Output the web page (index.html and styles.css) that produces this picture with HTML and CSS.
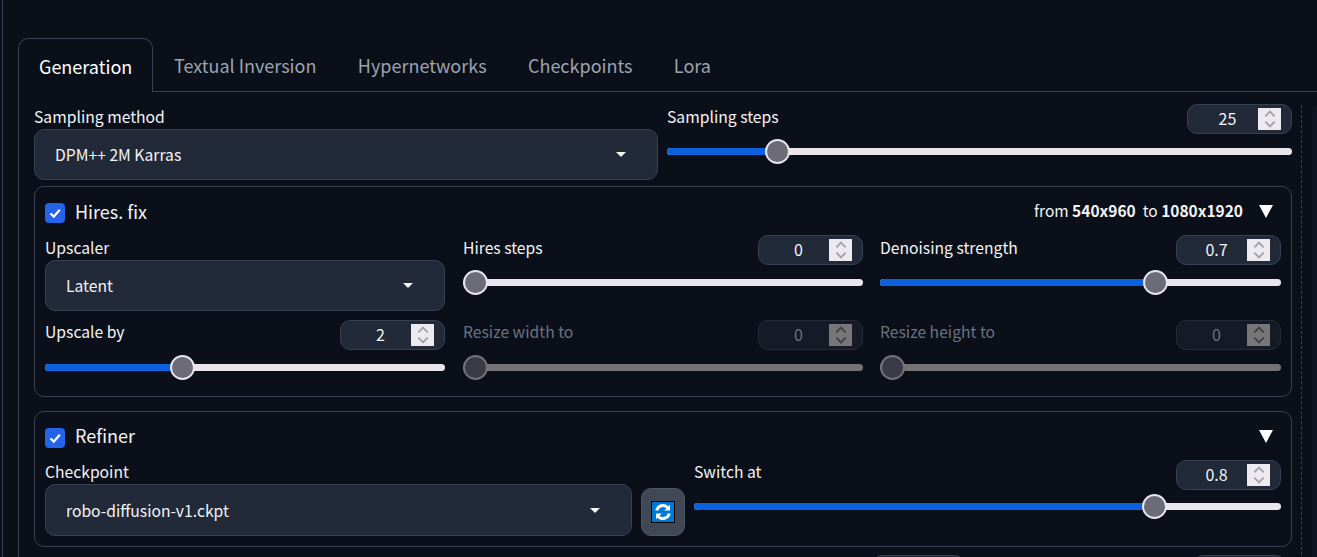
FILE: index.html
```html
<!DOCTYPE html>
<html>
<head>
    <title>Generation</title>
    <link rel="stylesheet" href="styles.css">
</head>
<body>
    <div id="page">
        <div id="tabs">
            <div class="tabNav">
                <div class="tabBtn active">Generation</div>
                <div class="tabBtn">Textual Inversion</div>
                <div class="tabBtn">Hypernetworks</div>
                <div class="tabBtn">Checkpoints</div>
                <div class="tabBtn">Lora</div>
                <div class="tabRest"></div>
            </div>
            <div class="tabBody">
                <div class="mainCol">
                    <div class="topRow">
                        <div class="dropField firstRow">
                            <div class="label">Sampling method</div>
                            <div class="select"><span>DPM++ 2M Karras</span><i class="caret"></i></div>
                        </div>
                        <div class="slider firstRow">
                            <div class="sliderHead">
                                <span class="label">Sampling steps</span>
                                <div class="num"><span>25</span><b class="spin"><svg viewBox="0 0 12 16"><path d="M2.5 6 6 2.5 9.5 6M2.5 10 6 13.5 9.5 10"/></svg></b></div>
                            </div>
                            <div class="track"><div class="fill" style="width: 17.6%"></div><div class="thumb" style="left: 17.6%"></div></div>
                        </div>
                    </div>

                    <div class="group hires">
                        <div class="groupHead">
                            <span class="check"><svg viewBox="0 0 20 20"><path d="M5.5 10.5 8.8 13.6 14.8 6.8"/></svg></span>
                            <span class="groupTitle">Hires. fix</span>
                            <span class="info">from <b>540x960</b>&nbsp; to <b>1080x1920</b></span>
                            <span class="arrow"></span>
                        </div>
                        <div class="grid3">
                            <div class="dropField firstRow">
                                <div class="label">Upscaler</div>
                                <div class="select"><span>Latent</span><i class="caret"></i></div>
                            </div>
                            <div class="slider firstRow">
                                <div class="sliderHead">
                                    <span class="label">Hires steps</span>
                                    <div class="num"><span>0</span><b class="spin"><svg viewBox="0 0 12 16"><path d="M2.5 6 6 2.5 9.5 6M2.5 10 6 13.5 9.5 10"/></svg></b></div>
                                </div>
                                <div class="track"><div class="fill" style="width: 3%"></div><div class="thumb" style="left: 3%"></div></div>
                            </div>
                            <div class="slider firstRow lastCol">
                                <div class="sliderHead">
                                    <span class="label">Denoising strength</span>
                                    <div class="num"><span>0.7</span><b class="spin"><svg viewBox="0 0 12 16"><path d="M2.5 6 6 2.5 9.5 6M2.5 10 6 13.5 9.5 10"/></svg></b></div>
                                </div>
                                <div class="track"><div class="fill" style="width: 68.7%"></div><div class="thumb" style="left: 68.7%"></div></div>
                            </div>
                            <div class="slider">
                                <div class="sliderHead">
                                    <span class="label">Upscale by</span>
                                    <div class="num"><span>2</span><b class="spin"><svg viewBox="0 0 12 16"><path d="M2.5 6 6 2.5 9.5 6M2.5 10 6 13.5 9.5 10"/></svg></b></div>
                                </div>
                                <div class="track"><div class="fill" style="width: 34.4%"></div><div class="thumb" style="left: 34.4%"></div></div>
                            </div>
                            <div class="slider off">
                                <div class="sliderHead">
                                    <span class="label">Resize width to</span>
                                    <div class="num"><span>0</span><b class="spin"><svg viewBox="0 0 12 16"><path d="M2.5 6 6 2.5 9.5 6M2.5 10 6 13.5 9.5 10"/></svg></b></div>
                                </div>
                                <div class="track"><div class="thumb" style="left: 3%"></div></div>
                            </div>
                            <div class="slider off lastCol">
                                <div class="sliderHead">
                                    <span class="label">Resize height to</span>
                                    <div class="num"><span>0</span><b class="spin"><svg viewBox="0 0 12 16"><path d="M2.5 6 6 2.5 9.5 6M2.5 10 6 13.5 9.5 10"/></svg></b></div>
                                </div>
                                <div class="track"><div class="thumb" style="left: 3%"></div></div>
                            </div>
                        </div>
                    </div>

                    <div class="group refiner">
                        <div class="groupHead">
                            <span class="check"><svg viewBox="0 0 20 20"><path d="M5.5 10.5 8.8 13.6 14.8 6.8"/></svg></span>
                            <span class="groupTitle">Refiner</span>
                            <span class="arrow"></span>
                        </div>
                        <div class="refinerRow">
                            <div class="dropField">
                                <div class="label">Checkpoint</div>
                                <div class="select"><span>robo-diffusion-v1.ckpt</span><i class="caret"></i></div>
                            </div>
                            <div class="refresh">
                                <span class="refreshIcon"><svg viewBox="0 0 16 16"><path d="M3 6.8A5.2 5.2 0 0 1 11.8 4.4M13 9.2A5.2 5.2 0 0 1 4.2 11.6"/><path class="solid" d="M13.6 2.2v4.6H9zM2.4 13.8V9.2H7z"/></svg></span>
                            </div>
                            <div class="slider">
                                <div class="sliderHead">
                                    <span class="label">Switch at</span>
                                    <div class="num"><span>0.8</span><b class="spin"><svg viewBox="0 0 12 16"><path d="M2.5 6 6 2.5 9.5 6M2.5 10 6 13.5 9.5 10"/></svg></b></div>
                                </div>
                                <div class="track"><div class="fill" style="width: 78.4%"></div><div class="thumb" style="left: 78.4%"></div></div>
                            </div>
                        </div>
                    </div>

                    <div class="nextRow">
                        <div class="stub"></div>
                        <div class="stub"></div>
                    </div>
                </div>
                <div class="sideCol"></div>
                <div class="sidePanel"></div>
            </div>
        </div>
    </div>
</body>
</html>
```

FILE: styles.css
```css
html, body {
    padding: 0;
    margin: 0;
    height: 100%;
    overflow: hidden;
    background: #0b0f19;
    color: #f3f4f6;
    font-family: "Noto Sans CJK SC", "Noto Sans", sans-serif;
    font-size: 16px;
}
#page {
    height: 557px;
    margin-left: 2px;
    padding: 38px 0 0 15px;
    border-left: 1px solid #374151;
    box-sizing: border-box;
    overflow: hidden;
}
#tabs {
    display: flex;
    flex-direction: column;
}
.tabNav {
    display: flex;
    height: 54px;
}
.tabBtn {
    padding: 0 20.7px;
    line-height: 54px;
    font-size: 18px;
    color: #9ca3af;
    border-bottom: 1px solid #374151;
}
.tabBtn.active {
    color: #fff;
    border: 1px solid #374151;
    border-bottom: 0;
    border-radius: 10px 10px 0 0;
    padding: 0 20px;
}
.tabRest {
    flex: 1;
    border-bottom: 1px solid #374151;
}
.tabBody {
    display: flex;
    align-items: flex-start;
    border-left: 1px solid #374151;
    padding: 13px 0 0 15px;
}
.mainCol {
    width: 1258px;
    flex-shrink: 0;
}
.sideCol {
    width: 0;
    height: 460px;
    margin-left: 9px;
    border-left: 1px dashed #374151;
    flex-shrink: 0;
}
.sidePanel {
    flex: 1;
    height: 460px;
    margin-left: 10px;
    background: #0d1420;
    border-radius: 10px 0 0 10px;
}
.label {
    font-size: 15.7px;
    line-height: 22px;
    margin-bottom: 2px;
    color: #f3f4f6;
}
.firstRow > .label {
    padding-top: 1px;
    margin-bottom: 1px;
}
.topRow {
    display: grid;
    grid-template-columns: 624px 1fr;
    column-gap: 9px;
}
.select {
    height: 51px;
    box-sizing: border-box;
    display: flex;
    align-items: center;
    justify-content: space-between;
    padding: 0 31px 0 20px;
    background: #222938;
    border: 1px solid #374151;
    border-radius: 10px;
    font-size: 15.7px;
    color: #f3f4f6;
}
.caret {
    width: 0;
    height: 0;
    border-left: 5px solid transparent;
    border-right: 5px solid transparent;
    border-top: 5px solid #f3f4f6;
}
.slider {
    margin-top: -1px;
}
.sliderHead {
    display: flex;
    justify-content: space-between;
    align-items: flex-start;
    height: 30px;
}
.sliderHead .label {
    padding-top: 1px;
}
.firstRow .sliderHead .label {
    padding-top: 2px;
}
.num {
    width: 105px;
    height: 30px;
    box-sizing: border-box;
    position: relative;
    background: #222938;
    border: 1px solid #374151;
    border-radius: 10px;
    font-size: 16px;
    line-height: 27px;
    text-align: center;
    color: #f3f4f6;
}
.num span {
    display: block;
    padding-right: 24px;
}
.spin {
    position: absolute;
    top: 3px;
    right: 10px;
    width: 23px;
    height: 22px;
    background: #eceaee;
}
.spin svg {
    display: block;
    width: 16px;
    height: 22px;
    margin: 0 auto;
}
.spin path {
    fill: none;
    stroke: #a3a1aa;
    stroke-width: 1.4;
}
.track {
    position: relative;
    height: 7px;
    margin-top: 14px;
    background: #e8e6ec;
    border-radius: 4px;
}
.fill {
    height: 100%;
    background: #0b60de;
    border-radius: 4px 0 0 4px;
}
.thumb {
    position: absolute;
    top: -9px;
    width: 25px;
    height: 25px;
    margin-left: -12.5px;
    box-sizing: border-box;
    background: #6b6c78;
    border: 2.5px solid #e8e6ec;
    border-radius: 50%;
}
.group {
    border: 1px solid #374151;
    border-radius: 10px;
    padding: 0 10px;
    box-sizing: border-box;
}
.hires {
    height: 211px;
    margin-top: 6px;
}
.refiner {
    height: 136px;
    margin-top: 14px;
}
.groupHead {
    display: flex;
    align-items: center;
    height: 49px;
    box-sizing: border-box;
    padding-top: 3px;
}
.check {
    width: 20px;
    height: 20px;
    background: #2563eb;
    border-radius: 4px;
    flex-shrink: 0;
}
.check svg {
    display: block;
}
.check path {
    fill: none;
    stroke: #fff;
    stroke-width: 2.2;
}
.groupTitle {
    margin-left: 10px;
    margin-bottom: 4px;
    font-size: 18px;
    color: #f3f4f6;
    flex: 1;
}
.refiner .groupTitle {
    margin-bottom: 6px;
}
.info {
    font-size: 15.5px;
    margin-right: 16px;
    margin-bottom: 6px;
    color: #f3f4f6;
}
.info b {
    font-weight: 600;
}
.arrow {
    width: 0;
    height: 0;
    margin-right: 8px;
    margin-bottom: 3px;
    border-left: 7px solid transparent;
    border-right: 7px solid transparent;
    border-top: 13px solid #fff;
}
.grid3 {
    display: grid;
    grid-template-columns: 400px 400px 400px;
    column-gap: 18px;
    row-gap: 10px;
}
.lastCol {
    margin-left: -1px;
}
.refinerRow {
    display: flex;
    align-items: flex-start;
}
.refinerRow .dropField {
    width: 587px;
}
.refinerRow .dropField .label {
    margin-bottom: 1px;
}
.refinerRow .select {
    height: 52px;
}
.refresh {
    width: 44px;
    height: 48px;
    margin: 27px 9px 0;
    box-sizing: border-box;
    background: #414855;
    border: 1px solid #4b5563;
    border-radius: 10px;
    display: flex;
    align-items: center;
    justify-content: center;
    flex-shrink: 0;
}
.refreshIcon {
    width: 24px;
    height: 22px;
    background: #0078d7;
    border: 1px solid #000;
    box-sizing: border-box;
    display: block;
}
.refreshIcon svg {
    display: block;
    width: 100%;
    height: 100%;
}
.refreshIcon path {
    fill: none;
    stroke: #fff;
    stroke-width: 2.4;
}
.refreshIcon path.solid {
    fill: #fff;
    stroke: none;
}
.refinerRow .slider {
    flex: 1;
}
.refinerRow .track {
    margin-top: 13px;
}
.off .label {
    color: #6b7280;
}
.off .num {
    background: #151a26;
    border-color: #252b38;
    color: #6b7280;
}
.off .spin {
    background: #777779;
}
.off .spin path {
    stroke: #3f4045;
}
.off .track {
    background: #747478;
}
.off .thumb {
    background: #3a3b48;
    border-color: #747478;
}
.nextRow {
    display: flex;
    justify-content: flex-end;
    gap: 228px;
    margin-top: 8px;
    padding-right: 6px;
}
.stub {
    width: 93px;
    height: 30px;
    box-sizing: border-box;
    background: #222938;
    border: 1px solid #374151;
    border-radius: 10px;
}
```
